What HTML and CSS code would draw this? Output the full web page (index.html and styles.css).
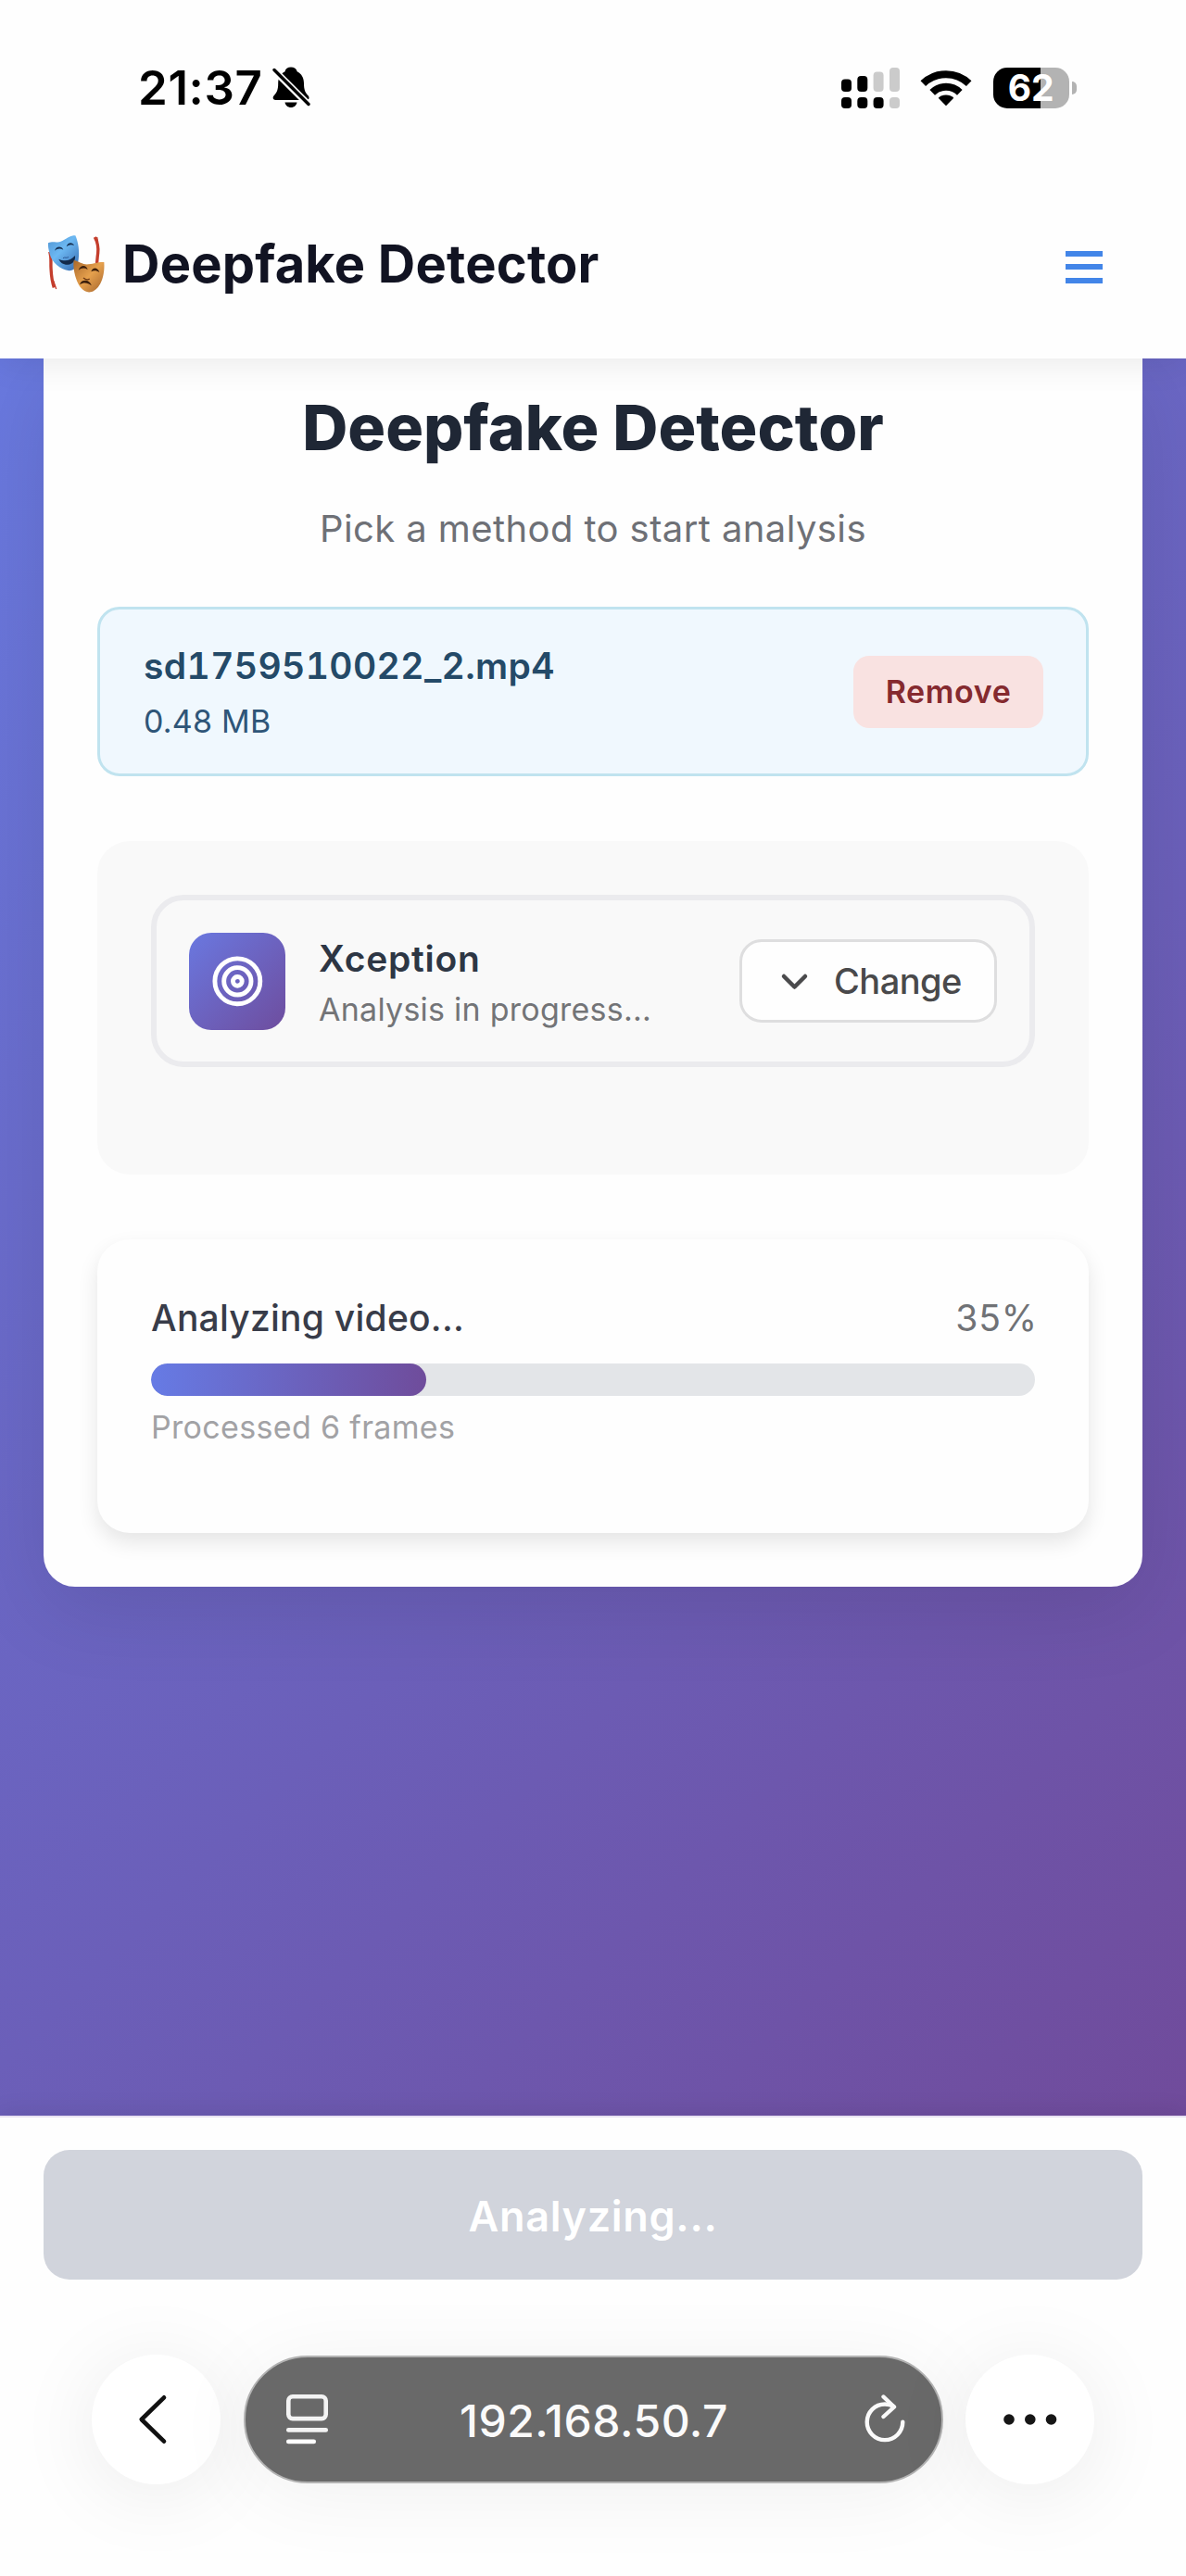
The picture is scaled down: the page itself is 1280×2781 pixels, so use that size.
FILE: index.html
```html
<!DOCTYPE html>
<html lang="en">
<head>
<meta charset="utf-8">
<title>Deepfake Detector</title>
<link rel="stylesheet" href="styles.css">
</head>
<body>
<div class="screen">
  <div class="top">
    <div class="status">
      <div class="status-left">
        <span class="time">21:37</span>
        <svg class="bell" width="41" height="45" viewBox="0 0 41 45">
          <path d="M20 0.5c-3.600 0-6 2-6.500 4.700C8.600 7.700 6.200 12.200 6.200 18c0 7.500-1.600 10-4.400 13C-.2 33.200.4 36 3.600 36h33c3.200 0 3.800-2.800 1.800-5-2.800-3-4.400-5.500-4.400-13 0-5.800-2.400-10.300-7.300-12.800C26.100 2.500 23.600.5 20 .5z"/>
          <path d="M13.500 38.500h13c-.6 3.400-3.200 5.500-6.500 5.500s-5.900-2.100-6.500-5.500z"/>
          <path d="M1.500 3.500l38 38" stroke="#fff" stroke-width="7.400"/>
          <path d="M2 3.500l37 37" stroke="#000" stroke-width="3.400" stroke-linecap="round"/>
        </svg>
      </div>
      <div class="status-right">
        <svg width="63" height="44" viewBox="0 0 63 44">
          <g fill="#000"><rect x="0" y="12.500" width="11" height="13.500" rx="4"/><rect x="17.300" y="9" width="11" height="17" rx="4"/><rect x="0" y="32" width="11" height="12" rx="4"/><rect x="17.300" y="32" width="11" height="12" rx="4"/><rect x="34.600" y="32" width="11" height="12" rx="4"/></g>
          <g fill="#cbcbcb"><rect x="34.600" y="4.500" width="11" height="21.500" rx="4"/><rect x="52" y="0" width="11" height="26" rx="4"/><rect x="52" y="32" width="11" height="12" rx="4"/></g>
        </svg>
        <svg width="56" height="44" viewBox="0 0 56 44">
          <g fill="none" stroke="#000" stroke-width="8"><path d="M3.300 17.200A35.500 35.500 0 0 1 52.700 17.200"/><path d="M13.200 26.800A21.200 21.200 0 0 1 42.800 26.800"/></g>
          <path d="M28 41.300L19.700 32.800A12 12 0 0 1 36.300 32.800Z"/>
        </svg>
        <div class="battery"><span class="battery-body">62</span><span class="battery-tip"></span></div>
      </div>
    </div>
    <header class="app-header">
      <div class="brand">
        <svg width="62" height="63" viewBox="33 39 186 189">
          <defs>
            <linearGradient id="blue" x1="0" y1="0" x2="0.900" y2="1"><stop offset="0" stop-color="#4f93d2"/><stop offset=".45" stop-color="#6cb8f2"/><stop offset="1" stop-color="#3a6fb4"/></linearGradient>
            <linearGradient id="gold" x1="0" y1="0" x2="1" y2="1"><stop offset="0" stop-color="#a9672b"/><stop offset=".5" stop-color="#e6a14d"/><stop offset="1" stop-color="#a3622c"/></linearGradient>
          </defs>
          <path d="M41 95c6 18 3 34 4 52s1 38 10 64" fill="none" stroke="#c43d2c" stroke-width="10"/>
          <path d="M53 190l9 26" stroke="#c43d2c" stroke-width="4"/>
          <path d="M187 48c10 18 12 34 10 52s-4 26-3 44" fill="none" stroke="#c43d2c" stroke-width="10"/>
          <path d="M194 48l3 16" stroke="#c43d2c" stroke-width="4"/>
          <path d="M36 67C52 60 64 69 82 60s24-17 42-17c10 22 14 52 10 78-3 23-15 36-30 36-28-4-56-26-63-54-4-16-6-26-5-36z" fill="url(#blue)"/>
          <path d="M57 92c4-16 23-17 28-3-10-6-19-5-28 3zM95 79c3-15 20-17 25-4-9-4-16-3-25 4z" fill="#173052"/>
          <path d="M70 119c20 9 39 5 53-11 2 17-8 28-23 29-14 1-25-6-30-18z" fill="#12294a"/>
          <path d="M84 116c6-5 12 2 18-4" fill="none" stroke="#2a5a98" stroke-width="3"/>
          <path d="M119 123c20 4 28 15 48 13s30-8 50-7c2 28-3 56-16 76-12 20-32 26-46 18-18-10-28-32-34-60-3-16-4-28-2-40z" fill="url(#gold)"/>
          <path d="M134 155c5-17 25-20 30-2-10-6-20-6-30 2zM175 160c4-16 22-16 27 2-9-6-18-7-27-2z" fill="#3c1f0c"/>
          <path d="M138 202c5-20 34-17 38 3-13-10-25-11-38-3z" fill="#3c1f0c"/>
          <path d="M150 180c7 6 14 7 20 3" fill="none" stroke="#6d3a14" stroke-width="4"/>
        </svg>
        <span class="brand-name">Deepfake Detector</span>
      </div>
      <div class="menu"><i></i><i></i><i></i></div>
    </header>
  </div>

  <main class="main">
    <section class="card">
      <h1>Deepfake Detector</h1>
      <p class="subtitle">Pick a method to start analysis</p>

      <div class="file">
        <div class="file-text">
          <div class="file-name">sd1759510022_2.mp4</div>
          <div class="file-size">0.48 MB</div>
        </div>
        <button class="remove">Remove</button>
      </div>

      <div class="panel">
        <div class="method">
          <div class="method-icon">
            <svg width="58.700" height="58.700" viewBox="0 0 24 24" fill="none" stroke="#fff" stroke-width="2"><circle cx="12" cy="12" r="10"/><circle cx="12" cy="12" r="6"/><circle cx="12" cy="12" r="2"/></svg>
          </div>
          <div class="method-text">
            <div class="method-name">Xception</div>
            <div class="method-state">Analysis in progress...</div>
          </div>
          <button class="change">
            <svg width="35" height="35" viewBox="0 0 35 35" fill="none" stroke="#4a4a4c" stroke-width="4.500" stroke-linecap="round" stroke-linejoin="round"><path d="M6 12L17.500 23.500L29 12"/></svg>
            <span>Change</span>
          </button>
        </div>
      </div>

      <div class="progress">
        <div class="progress-head"><span class="progress-title">Analyzing video...</span><span class="progress-value">35%</span></div>
        <div class="track"><div class="fill"></div></div>
        <div class="progress-note">Processed 6 frames</div>
      </div>
    </section>
  </main>

  <footer class="bottom">
    <button class="analyze">Analyzing...</button>
    <div class="browser">
      <div class="round">
        <svg width="40" height="60" viewBox="0 0 40 60" fill="none" stroke="#111" stroke-width="4.600" stroke-linecap="round" stroke-linejoin="round"><path d="M28 6.300L3.700 30L28 53.700"/></svg>
      </div>
      <div class="address">
        <svg width="45" height="54" viewBox="0 0 45 54">
          <rect x="2.300" y="2.300" width="40.400" height="23.800" rx="4.500" fill="none" stroke="#f3f3f3" stroke-width="4.600"/>
          <rect x="0" y="36" width="45" height="4.700" rx="2.300" fill="#f3f3f3"/><rect x="0" y="48.500" width="32" height="4.700" rx="2.300" fill="#fff"/>
        </svg>
        <span class="host">192.168.50.7</span>
        <svg width="44" height="54" viewBox="0 0 44 54" fill="none" stroke="#fafafa" stroke-width="4.400" stroke-linecap="round" stroke-linejoin="round"><path d="M41.300 29.800A19.300 19.300 0 1 1 22 10.500C25.500 10.500 28 11 31.500 13"/><path d="M20.500 2.500L32 13.500L20.500 24"/></svg>
      </div>
      <div class="round">
        <svg width="58" height="12" viewBox="0 0 58 12" fill="#161616"><circle cx="6" cy="6" r="5.800"/><circle cx="28.800" cy="6" r="5.800"/><circle cx="51.500" cy="6" r="5.800"/></svg>
      </div>
    </div>
  </footer>
</div>
</body>
</html>
```
FILE: styles.css
```css
* { box-sizing: border-box; }
body { margin: 0; font-family: Inter, "Liberation Sans", sans-serif; background: #fff; }
h1, p { margin: 0; }
svg { display: block; flex: none; }
button { font-family: inherit; border: 0; padding: 0; margin: 0; }
.screen { width: 1280px; height: 2781px; display: flex; flex-direction: column; overflow: hidden; }

.top { position: relative; z-index: 1; height: 387px; background: #fefefe; box-shadow: 0 6px 34px rgba(0, 0, 0, .08); }
.status { height: 189px; padding: 0 118px 0 149px; display: flex; align-items: center; justify-content: space-between; }
.status-left { display: flex; align-items: center; gap: 11px; }
.time { font-size: 51px; font-weight: 600; line-height: 62px; letter-spacing: .6px; color: #000; }
.status-right { display: flex; align-items: center; gap: 22.500px; }
.battery { display: flex; align-items: center; gap: 3px; }
.battery-body { width: 82.500px; height: 44px; border-radius: 15px; background: linear-gradient(90deg, #000 62%, #b3b3b3 62%); color: #fff; font-size: 39px; font-weight: 700; line-height: 44px; text-align: center; }
.battery-tip { width: 5px; height: 14px; border-radius: 0 5px 5px 0; background: #b3b3b3; }

.app-header { height: 198px; padding: 0 90px 0 51px; display: flex; align-items: center; justify-content: space-between; }
.brand { display: flex; align-items: center; gap: 19px; margin-bottom: 7px; }
.brand-name { font-size: 56px; font-weight: 700; line-height: 68px; letter-spacing: .2px; color: #111322; }
.menu { width: 40.500px; display: flex; flex-direction: column; gap: 8.500px; }
.menu i { height: 6px; background: #4285e8; }

.main { height: 1897px; padding: 0 47px; background: linear-gradient(135deg, #6979df 0%, #6b5fb9 58%, #704b9b 100%); }
.card { height: 1326px; padding: 33px 58px 0; background: #fefefe; border-radius: 0 0 34px 34px; box-shadow: 0 24px 90px rgba(0, 0, 0, .1); }
h1 { font-size: 68px; font-weight: 800; line-height: 82px; letter-spacing: 0; text-align: center; color: #1f2735; }
.subtitle { margin-top: 40px; font-size: 40px; line-height: 57px; letter-spacing: .4px; text-align: center; color: #6e7076; }

.file { margin-top: 56px; height: 183px; padding: 0 46px 0 47px; border: 3px solid #c0e3ef; border-radius: 24px; background: #f0f8fe; display: flex; align-items: center; justify-content: space-between; }
.file-text { padding-top: 4px; }
.file-name { font-size: 39px; font-weight: 600; line-height: 60px; letter-spacing: .4px; font-variant-numeric: tabular-nums; color: #244a68; }
.file-size { font-size: 34px; line-height: 60px; letter-spacing: .22px; color: #2e5578; }
.remove { width: 205px; height: 78px; border-radius: 17px; background: #f9e2e1; color: #852a2f; font-size: 34px; font-weight: 600; letter-spacing: .63px; }

.panel { margin-top: 70px; height: 360px; padding: 58px; border-radius: 35px; background: #f9f9f9; }
.method { height: 186px; padding: 0 35px; border: 6px solid #ebebee; border-radius: 35px; display: flex; align-items: center; }
.method-icon { width: 104px; height: 105px; border-radius: 24px; background: linear-gradient(135deg, #6a78e0, #6e4d9e); display: flex; align-items: center; justify-content: center; }
.method-text { flex: 1; margin-left: 36px; padding-top: 6px; }
.method-name { font-size: 39px; font-weight: 600; line-height: 55px; letter-spacing: .74px; color: #2d3644; }
.method-state { font-size: 34px; line-height: 55px; letter-spacing: .25px; color: #737477; }
.change { width: 278px; height: 90px; padding-left: 39px; border: 3px solid #dededf; border-radius: 24px; background: #fefefe; color: #49494b; font-size: 38px; font-weight: 500; letter-spacing: -.54px; display: flex; align-items: center; gap: 25px; }

.progress { margin-top: 70px; height: 317px; padding: 56px 58px 0; border-radius: 35px; background: #fefefe; box-shadow: 0 10px 22px rgba(0, 0, 0, .1); }
.progress-head { display: flex; justify-content: space-between; font-size: 39px; line-height: 57px; }
.progress-title { font-weight: 500; letter-spacing: .24px; color: #383c49; }
.progress-value { margin-right: -3px; letter-spacing: .9px; color: #707276; }
.track { margin-top: 21px; height: 35px; border-radius: 18px; background: #e3e5e8; overflow: hidden; }
.fill { width: 297px; height: 35px; border-radius: 18px; background: linear-gradient(90deg, #667be5, #6f4c9b); }
.progress-note { margin-top: 10px; font-size: 34px; line-height: 48px; letter-spacing: .33px; color: #a2a2a5; }

.bottom { position: relative; height: 497px; padding: 35px 47px 0; border-top: 2px solid #e8e2f2; background: #fefefe; box-shadow: 0 -4px 24px rgba(0, 0, 0, .08); }
.analyze { display: block; width: 1186px; height: 140px; padding-top: 3px; border-radius: 28px; background: #d1d4dc; color: #fff; font-size: 45px; font-weight: 600; letter-spacing: .69px; }
.browser { margin-top: 81px; padding: 0 52px; display: flex; align-items: center; justify-content: space-between; }
.round { width: 139px; height: 140px; border-radius: 50%; background: #fff; box-shadow: 0 10px 90px rgba(0, 0, 0, .08); display: flex; align-items: center; justify-content: center; }
.address { width: 755px; height: 138px; padding: 0 38px 0 44px; border: 2px solid #b2b2b2; border-radius: 69px; background: #696969; box-shadow: 0 10px 90px rgba(0, 0, 0, .06); color: #fafafa; font-size: 48px; font-weight: 500; letter-spacing: .51px; display: flex; align-items: center; justify-content: space-between; }
.host { padding: 2px 5px 0 0; }
```
